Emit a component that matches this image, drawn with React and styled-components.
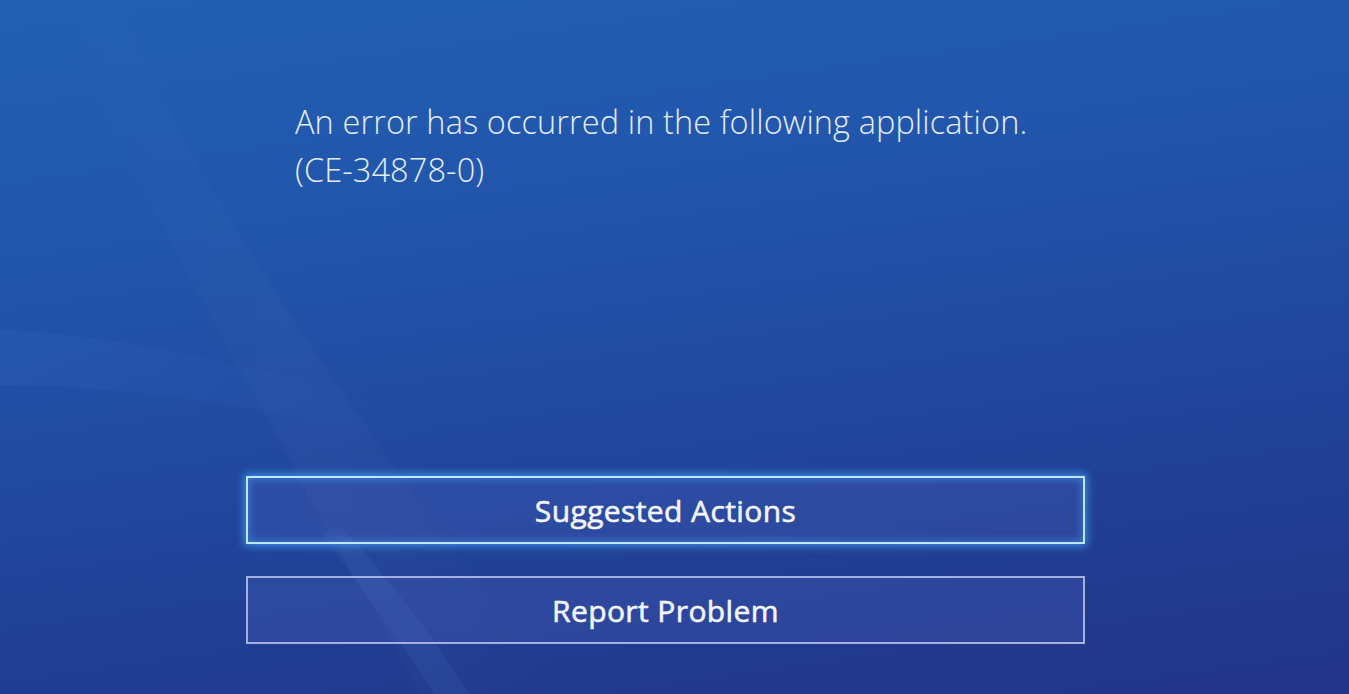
import React from "react";
import styled, { createGlobalStyle } from "styled-components";

const Global = createGlobalStyle`
  html, body { margin: 0; padding: 0; height: 100%; }
  body { overflow: hidden; }
  #root { height: 100%; }
`;

const Screen = styled.div`
  position: relative;
  width: 100vw;
  height: 100vh;
  overflow: hidden;
  background: linear-gradient(172deg, #2160b3 0%, #2156ac 30%, #2149a0 55%, #213d92 80%, #223487 100%);
  font-family: "Open Sans", "Noto Sans", sans-serif;
  color: #fff;
`;

const Streaks = styled.svg`
  position: absolute;
  inset: 0;
  width: 100%;
  height: 100%;
  pointer-events: none;
`;

const Content = styled.main`
  position: relative;
  display: flex;
  flex-direction: column;
  width: 839px;
  margin-left: 246px;
  padding-top: 98px;
`;

const Message = styled.p`
  margin: 0;
  padding-left: 49px;
  font-size: 32.5px;
  font-weight: 300;
  line-height: 48px;
  color: #e6ecf8;
  letter-spacing: 0.1px;
`;

const Actions = styled.div`
  display: flex;
  flex-direction: column;
  gap: 32px;
  margin-top: 282px;
`;

const ActionButton = styled.button`
  display: flex;
  align-items: center;
  justify-content: center;
  height: 68px;
  padding: 0;
  font-family: "Open Sans", "Noto Sans", sans-serif;
  font-size: 30px;
  font-weight: 400;
  -webkit-text-stroke: 0.6px #f2f5fc;
  color: #f2f5fc;
  letter-spacing: 0.4px;
  background: rgba(80, 100, 190, 0.26);
  border: 2px solid ${(p) => (p.$focused ? "#bfe6ff" : "#a3b1de")};
  box-shadow: ${(p) =>
    p.$focused
      ? "0 0 8px 2px rgba(70, 170, 255, 0.7), inset 0 0 8px 1px rgba(70, 170, 255, 0.5)"
      : "none"};
  cursor: pointer;
`;

export default function App() {
  return (
    <>
      <Global />
      <Screen>
        <Streaks viewBox="0 0 1349 694" preserveAspectRatio="none">
          <defs>
            <linearGradient id="s1" x1="0" y1="0" x2="1" y2="0">
              <stop offset="0" stopColor="#ffffff" stopOpacity="0" />
              <stop offset="0.5" stopColor="#ffffff" stopOpacity="0.025" />
              <stop offset="1" stopColor="#ffffff" stopOpacity="0" />
            </linearGradient>
            <linearGradient id="s2" x1="0" y1="0" x2="1" y2="0">
              <stop offset="0" stopColor="#3f72d0" stopOpacity="0.16" />
              <stop offset="1" stopColor="#3f72d0" stopOpacity="0" />
            </linearGradient>
          </defs>
          <path d="M50 0 C 120 160, 220 330, 290 460 C 330 540, 370 600, 420 694 L 560 694 C 480 590, 380 450, 280 300 C 210 190, 150 90, 120 0 Z" fill="url(#s1)" />
          <path d="M0 330 C 120 335, 260 365, 420 415 L 420 445 C 260 405, 120 385, 0 385 Z" fill="url(#s2)" />
          <path d="M320 530 C 370 600, 405 650, 435 694 L 470 694 C 435 640, 390 580, 345 530 Z" fill="#5a90e6" fillOpacity="0.10" />
        </Streaks>
        <Content>
          <Message>
            An error has occurred in the following application.
            <br />
            (CE-34878-0)
          </Message>
          <Actions>
            <ActionButton $focused>Suggested Actions</ActionButton>
            <ActionButton>Report Problem</ActionButton>
          </Actions>
        </Content>
      </Screen>
    </>
  );
}
